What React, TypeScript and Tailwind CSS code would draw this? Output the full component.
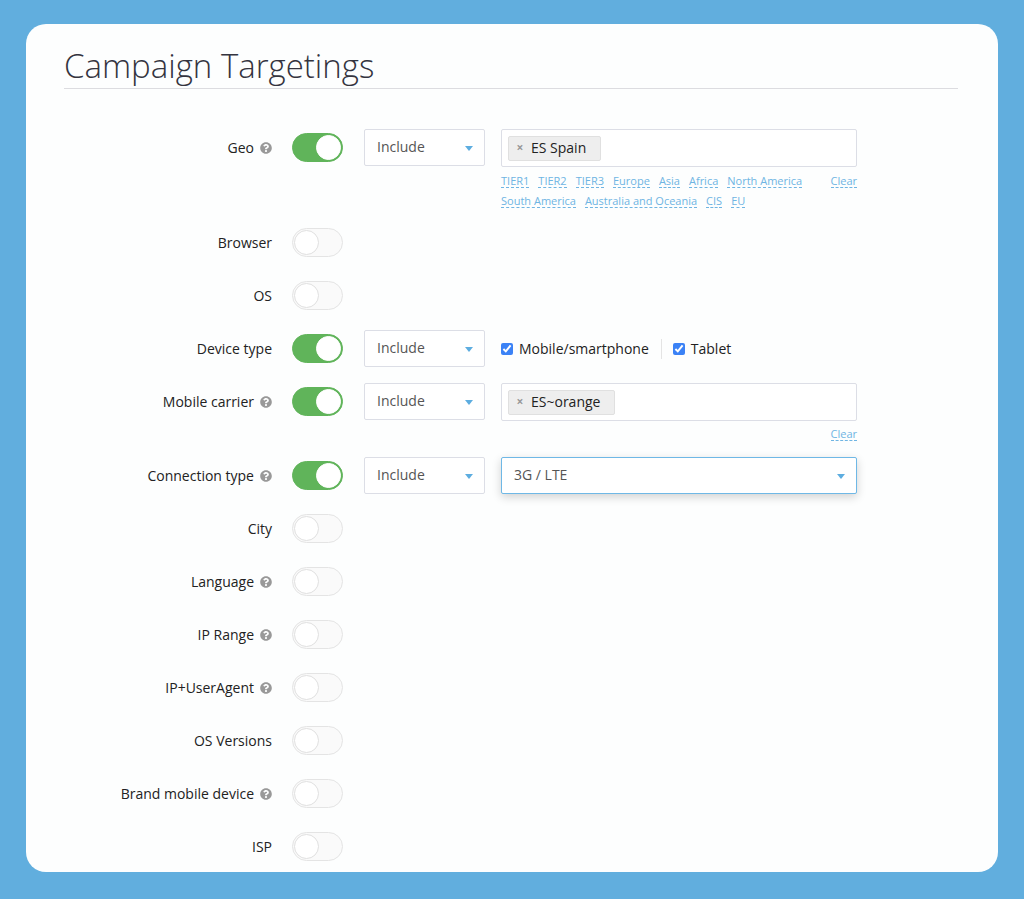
import React, { useState } from 'react';
import { FaQuestionCircle } from 'react-icons/fa';

const REGIONS = [
  'TIER1', 'TIER2', 'TIER3', 'Europe', 'Asia', 'Africa', 'North America',
  'South America', 'Australia and Oceania', 'CIS', 'EU',
];

interface Targeting {
  id: string;
  label: string;
  help?: boolean;
  on?: boolean;
}

const TARGETINGS: Targeting[] = [
  { id: 'geo', label: 'Geo', help: true, on: true },
  { id: 'browser', label: 'Browser' },
  { id: 'os', label: 'OS' },
  { id: 'device', label: 'Device type', on: true },
  { id: 'carrier', label: 'Mobile carrier', help: true, on: true },
  { id: 'connection', label: 'Connection type', help: true, on: true },
  { id: 'city', label: 'City' },
  { id: 'language', label: 'Language', help: true },
  { id: 'ip', label: 'IP Range', help: true },
  { id: 'ua', label: 'IP+UserAgent', help: true },
  { id: 'osv', label: 'OS Versions' },
  { id: 'brand', label: 'Brand mobile device', help: true },
  { id: 'isp', label: 'ISP' },
];

const Arrow: React.FC = () => (
  <svg viewBox="0 0 8 5" className="absolute right-3 top-[17px] w-2 h-[5px] fill-[#5dade0] pointer-events-none">
    <path d="M0 0h8L4 5z" />
  </svg>
);

const ModeSelect: React.FC<{ name: string }> = ({ name }) => (
  <div className="relative">
    <select
      aria-label={`${name} mode`}
      className="block w-full h-[37px] pl-3 pb-[2px] appearance-none rounded-xs border border-[#dcdee6] bg-white text-sm text-[#555]"
    >
      <option>Include</option>
      <option>Exclude</option>
    </select>
    <Arrow />
  </div>
);

const DashedButton: React.FC<{ children: React.ReactNode; onClick?: () => void }> = ({ children, onClick }) => (
  <button
    type="button"
    onClick={onClick}
    className="h-[14px] text-[11px] leading-[13px] whitespace-nowrap text-[#6fb5e3] border-b border-dashed border-[#6fb5e3] cursor-pointer"
  >
    {children}
  </button>
);

const TagBox: React.FC<{ name: string; tags: string[]; onRemove: (tag: string) => void }> = ({ name, tags, onRemove }) => (
  <div className="flex items-center h-[38px] px-[6px] rounded-xs border border-[#dcdee6] bg-white">
    {tags.map(tag => (
      <span key={tag} className="flex items-center h-[25px] pr-[14px] rounded-xs border border-[#e0e0e0] bg-[#eee] text-sm text-[#222] whitespace-nowrap">
        <button type="button" aria-label={`Remove ${tag}`} onClick={() => onRemove(tag)} className="w-[22px] text-xs font-bold text-[#999]">
          ×
        </button>
        {tag}
      </span>
    ))}
    <input type="text" aria-label={name} className="flex-1 min-w-0 h-full px-2 text-sm outline-none" />
  </div>
);

const App: React.FC = () => {
  const [enabled, setEnabled] = useState<Record<string, boolean>>(
    Object.fromEntries(TARGETINGS.map(t => [t.id, !!t.on]))
  );
  const [geo, setGeo] = useState(['ES Spain']);
  const [carriers, setCarriers] = useState(['ES~orange']);

  const renderField = (id: string) => {
    if (id === 'geo') {
      return (
        <div>
          <TagBox name="Geo" tags={geo} onRemove={tag => setGeo(geo.filter(t => t !== tag))} />
          <div className="flex items-start justify-between gap-4 pt-[7px]">
            <div className="flex flex-wrap gap-x-[9px] gap-y-[6px]">
              {REGIONS.map(region => <DashedButton key={region}>{region}</DashedButton>)}
            </div>
            <DashedButton onClick={() => setGeo([])}>Clear</DashedButton>
          </div>
        </div>
      );
    }
    if (id === 'device') {
      return (
        <div className="flex items-center h-[37px] text-sm text-[#222]">
          <label className="flex items-center gap-[6px] h-5 pr-3 border-r border-[#e4e4e4]">
            <input type="checkbox" defaultChecked className="w-3 h-3 accent-[#3b82f6]" />
            Mobile/smartphone
          </label>
          <label className="flex items-center gap-[6px] pl-[11px]">
            <input type="checkbox" defaultChecked className="w-3 h-3 accent-[#3b82f6]" />
            Tablet
          </label>
        </div>
      );
    }
    if (id === 'carrier') {
      return (
        <div>
          <TagBox name="Mobile carrier" tags={carriers} onRemove={tag => setCarriers(carriers.filter(t => t !== tag))} />
          <div className="flex justify-end pt-[6px]">
            <DashedButton onClick={() => setCarriers([])}>Clear</DashedButton>
          </div>
        </div>
      );
    }
    if (id === 'connection') {
      return (
        <div className="relative">
          <select
            aria-label="Connection type"
            className="block w-full h-[37px] pl-3 pb-[2px] appearance-none rounded-xs border border-[#6fb8e6] bg-white text-sm text-[#555] shadow-[0_3px_10px_rgba(0,0,0,0.18)]"
          >
            <option>3G / LTE</option>
            <option>WiFi</option>
          </select>
          <Arrow />
        </div>
      );
    }
    return null;
  };

  return (
    <div className="min-h-screen bg-[#61aede] px-[26px] pt-6 pb-7 font-['Open_Sans',sans-serif]">
      <main className="rounded-[20px] bg-[#fdfefe] pl-[38px] pr-10 pt-5 pb-[7px]">
        <h1 className="h-[45px] text-[33px] leading-[44px] font-light text-[#34343f] border-b border-[#dcdce0]">
          Campaign Targetings
        </h1>

        <form className="flex flex-col gap-4 pt-10 pr-[101px]">
          {TARGETINGS.map(({ id, label, help }) => (
            <div
              key={id}
              className={`grid grid-cols-[208px_52px_121px_minmax(0,1fr)] gap-x-5 items-start ${id === 'geo' ? 'min-h-[79px]' : id === 'carrier' ? 'min-h-[58px]' : 'min-h-[37px]'}`}
            >
              <div className="flex items-center justify-end gap-[6px] h-[37px] text-sm text-[#222]">
                <label htmlFor={id}>{label}</label>
                {help && <FaQuestionCircle className="w-3 h-3 text-[#999]" />}
              </div>
              <div className="flex items-center h-[37px]">
                <input
                  id={id}
                  type="checkbox"
                  role="switch"
                  checked={enabled[id]}
                  onChange={e => setEnabled({ ...enabled, [id]: e.target.checked })}
                  className="flex items-center w-[51px] h-[29px] px-px appearance-none rounded-full border border-[#e4e4e4] bg-[#fafafa] cursor-pointer before:block before:w-[25px] before:h-[25px] before:rounded-full before:border before:border-[#e0e0e0] before:bg-white checked:justify-end checked:border-[#60b45a] checked:bg-[#60b45a] checked:before:border-white"
                />
              </div>
              {enabled[id] && renderField(id) && (
                <>
                  <ModeSelect name={label} />
                  <div className="-ml-1">{renderField(id)}</div>
                </>
              )}
            </div>
          ))}
        </form>
      </main>
    </div>
  );
};

export default App;
